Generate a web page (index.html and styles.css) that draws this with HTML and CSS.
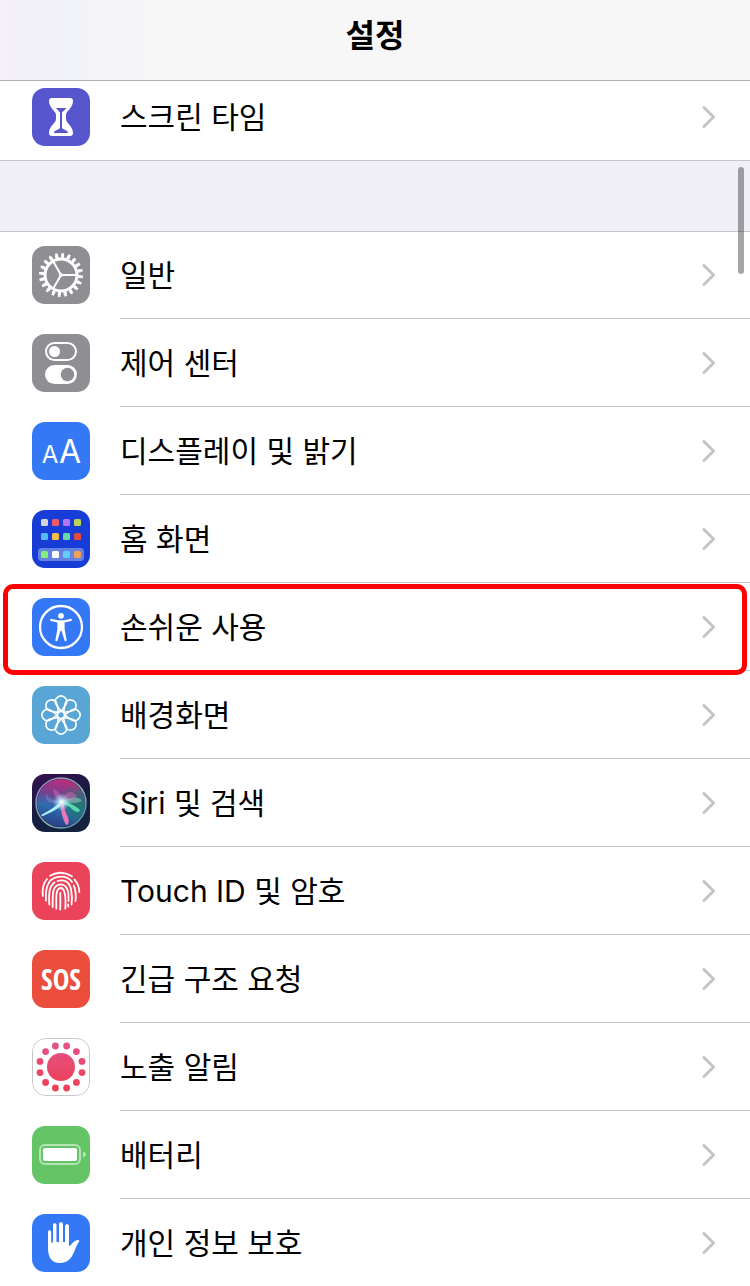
FILE: index.html
```
<!DOCTYPE html>
<html lang="ko">
<head>
<meta charset="utf-8">
<meta name="viewport" content="width=device-width, initial-scale=1">
<title>설정</title>
<link rel="stylesheet" href="styles.css">
</head>
<body>
<svg class="defs" aria-hidden="true">
  <defs>
    <symbol id="chevron" viewBox="0 0 16 24"><path d="M3 2.500 12.500 12 3 21.500" fill="none" stroke="currentColor" stroke-width="3" stroke-linecap="round" stroke-linejoin="round"/></symbol>
    <linearGradient id="virus" gradientUnits="userSpaceOnUse" x1="0" y1="4" x2="0" y2="54"><stop offset="0" stop-color="#e3528a"/><stop offset="1" stop-color="#ee3f52"/></linearGradient>
    <linearGradient id="siri-bg" x1="0" y1="0" x2="0.300" y2="1"><stop offset="0" stop-color="#35104f"/><stop offset="0.500" stop-color="#191b43"/><stop offset="1" stop-color="#14223f"/></linearGradient>
    <linearGradient id="siri-orb" x1="0.600" y1="0" x2="0.400" y2="1"><stop offset="0" stop-color="#c22b7c"/><stop offset="0.350" stop-color="#74408f"/><stop offset="0.600" stop-color="#2f6cae"/><stop offset="1" stop-color="#2a3f86"/></linearGradient>
    <radialGradient id="siri-green" cx="0.900" cy="0.550" r="0.500"><stop offset="0" stop-color="#1e7a70"/><stop offset="1" stop-color="#1e7a70" stop-opacity="0"/></radialGradient>
    <radialGradient id="siri-glow"><stop offset="0" stop-color="#fff"/><stop offset="0.300" stop-color="#d5f6ff" stop-opacity="0.800"/><stop offset="1" stop-color="#9fd8ff" stop-opacity="0"/></radialGradient>
    <linearGradient id="siri-ring" x1="0" y1="0" x2="1" y2="1"><stop offset="0" stop-color="#a77fc0"/><stop offset="0.600" stop-color="#7fc0ad"/><stop offset="1" stop-color="#5b7fc0"/></linearGradient>
  </defs>
</svg>

<header class="nav-bar"><h1 class="nav-title">설정</h1></header>

<main class="settings">
  <ul class="group group-top">
    <li class="item"><a class="row" href="#screen-time">
      <svg class="icon indigo" viewBox="0 0 58 58" aria-hidden="true"><path d="M20 10H38Q41 10 41 13C41 20 34 23 34 27V31C34 35 41 38 41 45Q41 48 38 48H20Q17 48 17 45C17 38 24 35 24 31V27C24 23 17 20 17 13Q17 10 20 10Z" fill="#fff"/><path d="M24 20H34.500L30 24.500V40C32 42 36 42 36 45H22C22 42 26 42 28 40V24.500Z" fill="#5856ce"/></svg>
      <span class="body"><span class="label">스크린 타임</span><svg class="chevron" aria-hidden="true"><use href="#chevron"/></svg></span></a></li>
  </ul>

  <ul class="group">
    <li class="item"><a class="row" href="#general">
      <svg class="icon gray" viewBox="0 0 58 58" aria-hidden="true"><g fill="none" stroke="#fff"><circle cx="29" cy="29" r="16" stroke-width="3"/><circle cx="29" cy="29" r="18.500" stroke-width="3" pathLength="80" stroke-dasharray="2.200 1.800"/><circle cx="29" cy="29" r="20" stroke-width="4" pathLength="80" stroke-dasharray="1.600 2.400" stroke-dashoffset="-0.300"/><path d="M45 29H29L21 15M29 29 21 43" stroke-width="2"/></g><circle cx="29" cy="29" r="2" fill="#fff"/></svg>
      <span class="body"><span class="label">일반</span><svg class="chevron" aria-hidden="true"><use href="#chevron"/></svg></span></a></li>
    <li class="item"><a class="row" href="#control-center">
      <svg class="icon gray" viewBox="0 0 58 58" aria-hidden="true"><rect x="14" y="9" width="30" height="17" rx="8.500" fill="none" stroke="#fff" stroke-width="2"/><circle cx="22.500" cy="17.500" r="5.500" fill="#fff"/><rect x="13" y="31" width="32" height="19" rx="9.500" fill="#fff"/><circle cx="35.500" cy="40.500" r="6.700" fill="#8e8e93"/></svg>
      <span class="body"><span class="label">제어 센터</span><svg class="chevron" aria-hidden="true"><use href="#chevron"/></svg></span></a></li>
    <li class="item"><a class="row" href="#display">
      <svg class="icon blue" viewBox="0 0 58 58" aria-hidden="true"><g class="type-sample"><text x="18" y="41" font-size="24">A</text><text x="38" y="41" font-size="32">A</text></g></svg>
      <span class="body"><span class="label">디스플레이 및 밝기</span><svg class="chevron" aria-hidden="true"><use href="#chevron"/></svg></span></a></li>
    <li class="item"><a class="row" href="#home-screen">
      <svg class="icon navy" viewBox="0 0 58 58" aria-hidden="true"><rect x="6" y="38" width="46" height="13" rx="3.500" fill="#6482e2"/><g><rect x="9" y="9" width="7" height="7" rx="1.500" fill="#d4d5d4"/><rect x="20" y="9" width="7" height="7" rx="1.500" fill="#ee5a68"/><rect x="31" y="9" width="7" height="7" rx="1.500" fill="#b574f5"/><rect x="42" y="9" width="7" height="7" rx="1.500" fill="#b9d354"/><rect x="9" y="23" width="7" height="7" rx="1.500" fill="#57baf3"/><rect x="20" y="23" width="7" height="7" rx="1.500" fill="#f8bf45"/><rect x="31" y="23" width="7" height="7" rx="1.500" fill="#6dd8a5"/><rect x="42" y="23" width="7" height="7" rx="1.500" fill="#e74b3e"/><rect x="9" y="41" width="7" height="7" rx="1.500" fill="#84ee7c"/><rect x="20" y="41" width="7" height="7" rx="1.500" fill="#fff"/><rect x="31" y="41" width="7" height="7" rx="1.500" fill="#62cbfa"/><rect x="42" y="41" width="7" height="7" rx="1.500" fill="#f2a057"/></g></svg>
      <span class="body"><span class="label">홈 화면</span><svg class="chevron" aria-hidden="true"><use href="#chevron"/></svg></span></a></li>
    <li class="item highlighted"><a class="row" href="#accessibility">
      <svg class="icon blue" viewBox="0 0 58 58" aria-hidden="true"><circle cx="29" cy="29" r="21" fill="none" stroke="#fff" stroke-width="2.300"/><circle cx="29" cy="17.800" r="2.900" fill="#fff"/><path d="M18.800 20.800 26 22.200H32L39.200 20.800Q40.800 21.800 39.400 22.900L32.600 24.400V31L34.700 42.500Q33.800 43.900 32.600 42.800L29.600 33H28.400L25.400 42.800Q24.200 43.900 23.300 42.500L25.400 31V24.400L18.600 22.900Q17.200 21.800 18.800 20.800Z" fill="#fff"/></svg>
      <span class="body"><span class="label">손쉬운 사용</span><svg class="chevron" aria-hidden="true"><use href="#chevron"/></svg></span></a></li>
    <li class="item"><a class="row" href="#wallpaper">
      <svg class="icon sky" viewBox="0 0 58 58" aria-hidden="true"><defs><path id="petal" d="M29 25.500 24.200 18.500A5.600 5.600 0 1 1 33.800 18.500Z"/></defs><g fill="none" stroke="#fff" stroke-width="1.600" stroke-linejoin="round"><use href="#petal"/><use href="#petal" transform="rotate(45 29 29)"/><use href="#petal" transform="rotate(90 29 29)"/><use href="#petal" transform="rotate(135 29 29)"/><use href="#petal" transform="rotate(180 29 29)"/><use href="#petal" transform="rotate(225 29 29)"/><use href="#petal" transform="rotate(270 29 29)"/><use href="#petal" transform="rotate(315 29 29)"/><circle cx="29" cy="29" r="3.500"/></g></svg>
      <span class="body"><span class="label">배경화면</span><svg class="chevron" aria-hidden="true"><use href="#chevron"/></svg></span></a></li>
    <li class="item"><a class="row" href="#siri">
      <svg class="icon" viewBox="0 0 58 58" aria-hidden="true"><rect width="58" height="58" fill="url(#siri-bg)"/><circle cx="29" cy="29" r="24" fill="url(#siri-orb)"/><circle cx="29" cy="29" r="24" fill="url(#siri-green)"/><path d="M21 15Q28 16 30 27Q36 12 44 21Q47 25 30 28Q20 22 21 15Z" fill="#e56bb5" opacity="0.450"/><path d="M30 27Q17 26 14 20Q12 32 30 28Z" fill="#7f9ede" opacity="0.400"/><path d="M30 27Q46 20 50 27Q42 31 30 28Z" fill="#9fd5c9" opacity="0.500"/><path d="M30 26Q23 34 9 41Q10 43 13 41Q25 36 31 30Z" fill="#a8f4fb"/><path d="M30 26Q43 31 48 36Q47 40 41 36Q37 31 29 30Z" fill="#58d9ab"/><path d="M28 28Q29 42 34 51Q38 51 36 43Q32 36 32 29Z" fill="#e976bd"/><circle cx="29.500" cy="28" r="9" fill="url(#siri-glow)"/><circle cx="29" cy="29" r="25" fill="none" stroke="url(#siri-ring)" stroke-width="1.400"/></svg>
      <span class="body"><span class="label">Siri 및 검색</span><svg class="chevron" aria-hidden="true"><use href="#chevron"/></svg></span></a></li>
    <li class="item"><a class="row" href="#touch-id">
      <svg class="icon rose" viewBox="0 0 58 58" aria-hidden="true"><g fill="none" stroke="#fff" stroke-width="1.800" stroke-linecap="round"><path d="M18 13.800Q29 7.500 40 14.200M15 17Q9.800 22.500 10.800 34M42.500 17.500Q47.300 23 47.300 30"/><path d="M14 38.500C13 24 17 14.700 29 14.700Q36.500 14.700 40 20M41.800 23.500Q44.500 30 43.500 39"/><path d="M17.300 42.500C16.500 29 18 23.500 22.500 20.500M25.500 19Q36 16 39 27Q40.500 35 39.600 42.500"/><path d="M20.700 45C20.500 32 20 22.500 29 22.300Q37.500 23 36.500 39M36.200 42.500V44.500"/><path d="M24.300 46.700C24.300 36 23.200 26 29 26Q34.500 27 33.300 46.700"/><path d="M28.200 47.500C28.500 42 28.300 37 28.300 31"/></g></svg>
      <span class="body"><span class="label">Touch ID 및 암호</span><svg class="chevron" aria-hidden="true"><use href="#chevron"/></svg></span></a></li>
    <li class="item"><a class="row" href="#sos">
      <span class="icon red sos" aria-hidden="true">SOS</span>
      <span class="body"><span class="label">긴급 구조 요청</span><svg class="chevron" aria-hidden="true"><use href="#chevron"/></svg></span></a></li>
    <li class="item"><a class="row" href="#exposure">
      <svg class="icon" viewBox="0 0 58 58" aria-hidden="true"><rect x="0.500" y="0.500" width="57" height="57" rx="13" fill="#fff" stroke="#c8c8ca"/><circle cx="29" cy="29" r="14" fill="url(#virus)"/><g fill="url(#virus)"><circle cx="34.600" cy="8" r="3.400"/><circle cx="44.400" cy="13.600" r="3.400"/><circle cx="50" cy="23.400" r="3.400"/><circle cx="50" cy="34.600" r="3.400"/><circle cx="44.400" cy="44.400" r="3.400"/><circle cx="34.600" cy="50" r="3.400"/><circle cx="23.400" cy="50" r="3.400"/><circle cx="13.600" cy="44.400" r="3.400"/><circle cx="8" cy="34.600" r="3.400"/><circle cx="8" cy="23.400" r="3.400"/><circle cx="13.600" cy="13.600" r="3.400"/><circle cx="23.400" cy="8" r="3.400"/></g></svg>
      <span class="body"><span class="label">노출 알림</span><svg class="chevron" aria-hidden="true"><use href="#chevron"/></svg></span></a></li>
    <li class="item"><a class="row" href="#battery">
      <svg class="icon green" viewBox="0 0 58 58" aria-hidden="true"><rect x="8" y="19" width="40" height="19" rx="5" fill="none" stroke="#b5e5b7" stroke-width="2"/><rect x="11" y="22" width="34" height="13" rx="2" fill="#fff"/><path d="M51 25.500Q54 26.500 54 28.500T51 31.500Z" fill="#b5e5b7"/></svg>
      <span class="body"><span class="label">배터리</span><svg class="chevron" aria-hidden="true"><use href="#chevron"/></svg></span></a></li>
    <li class="item"><a class="row" href="#privacy">
      <svg class="icon blue" viewBox="0 0 58 58" aria-hidden="true"><path d="M16 17.500Q17.600 14.500 19.200 17.500V28.500H21V10.500Q22.800 7.500 24.500 10.500V28H27V9.500Q29 6.500 31 9.500V28H33V11.500Q35 8.500 37 11.500V32C39.500 32.500 40.500 26 46.500 26Q48 26.500 46.500 28.500C42 34 42 49 28 49C18 49 16 41 16 34Z" fill="#fff"/></svg>
      <span class="body"><span class="label">개인 정보 보호</span><svg class="chevron" aria-hidden="true"><use href="#chevron"/></svg></span></a></li>
  </ul>
  <div class="scroll-thumb" aria-hidden="true"></div>
</main>
</body>
</html>
```
FILE: styles.css
```
* { box-sizing: border-box; }

body {
  margin: 0;
  background: #fff;
  color: #000;
  font-family: Inter, "Noto Sans CJK KR", sans-serif;
  font-size: 30px;
  line-height: 40px;
}

.defs { position: absolute; width: 0; height: 0; }

.nav-bar {
  display: flex;
  justify-content: center;
  padding: 16px 0 24px;
  border-bottom: 1px solid #b2b2b4;
  background: linear-gradient(90deg, #f4f1f7 0, #f1f1fa 60px, #f5f5f8 110px, #f7f7f7 200px);
}

.nav-title {
  margin: 0;
  font-size: 32px;
  font-weight: 700;
  line-height: 40px;
}

.settings {
  position: relative;
  display: flex;
  flex-direction: column;
  gap: 70px;
  background: #f0eff5;
}

.group {
  margin: 0;
  padding: 0;
  border-top: 1px solid #c6c6c8;
  list-style: none;
}

.group-top {
  border-top: 0;
  border-bottom: 1px solid #c6c6c8;
}

.item {
  position: relative;
  background: #fff;
}

.row {
  display: flex;
  gap: 30px;
  padding-left: 32px;
  color: inherit;
  text-decoration: none;
}

.icon {
  flex: none;
  width: 58px;
  height: 58px;
  margin: 15px 0;
  border-radius: 13px;
}

.body {
  flex: 1;
  display: flex;
  align-items: center;
  justify-content: space-between;
  padding-right: 33px;
  border-bottom: 1px solid #c6c6c8;
}

.item:first-child .icon { margin-top: 14px; }
.item:last-child .icon { margin-bottom: 14px; }
.item:last-child .body { border-bottom: 0; }

/* The first group is partly scrolled under the bar. */
.group-top .item .icon { margin-top: 7px; }
.group-top .item .body { padding-bottom: 7px; }

.chevron {
  flex: none;
  width: 16px;
  height: 24px;
  color: #c4c4c6;
}

.indigo { background: #5856ce; }
.gray { background: #8e8e93; }
.blue { background: #3478f6; }
.navy { background: #183dd6; }
.sky { background: #59a6d6; }
.rose { background: #eb445a; }
.red { background: #eb4e3d; }
.green { background: #65c466; }

.type-sample {
  fill: #fff;
  font-family: Inter, sans-serif;
  text-anchor: middle;
}

.sos {
  display: flex;
  align-items: center;
  justify-content: center;
  color: #fff;
  font-family: "Liberation Sans Narrow", "Open Sans Condensed", Roboto, sans-serif;
  font-size: 28px;
  font-weight: 700;
}

.highlighted::after {
  content: "";
  position: absolute;
  z-index: 1;
  inset: 1px 3px -4px;
  border: 5px solid #f00;
  border-radius: 10px;
  pointer-events: none;
}

.scroll-thumb {
  position: absolute;
  top: 86px;
  right: 6px;
  width: 6px;
  height: 107px;
  border-radius: 3px;
  background: rgba(0, 0, 0, 0.35);
}
```
